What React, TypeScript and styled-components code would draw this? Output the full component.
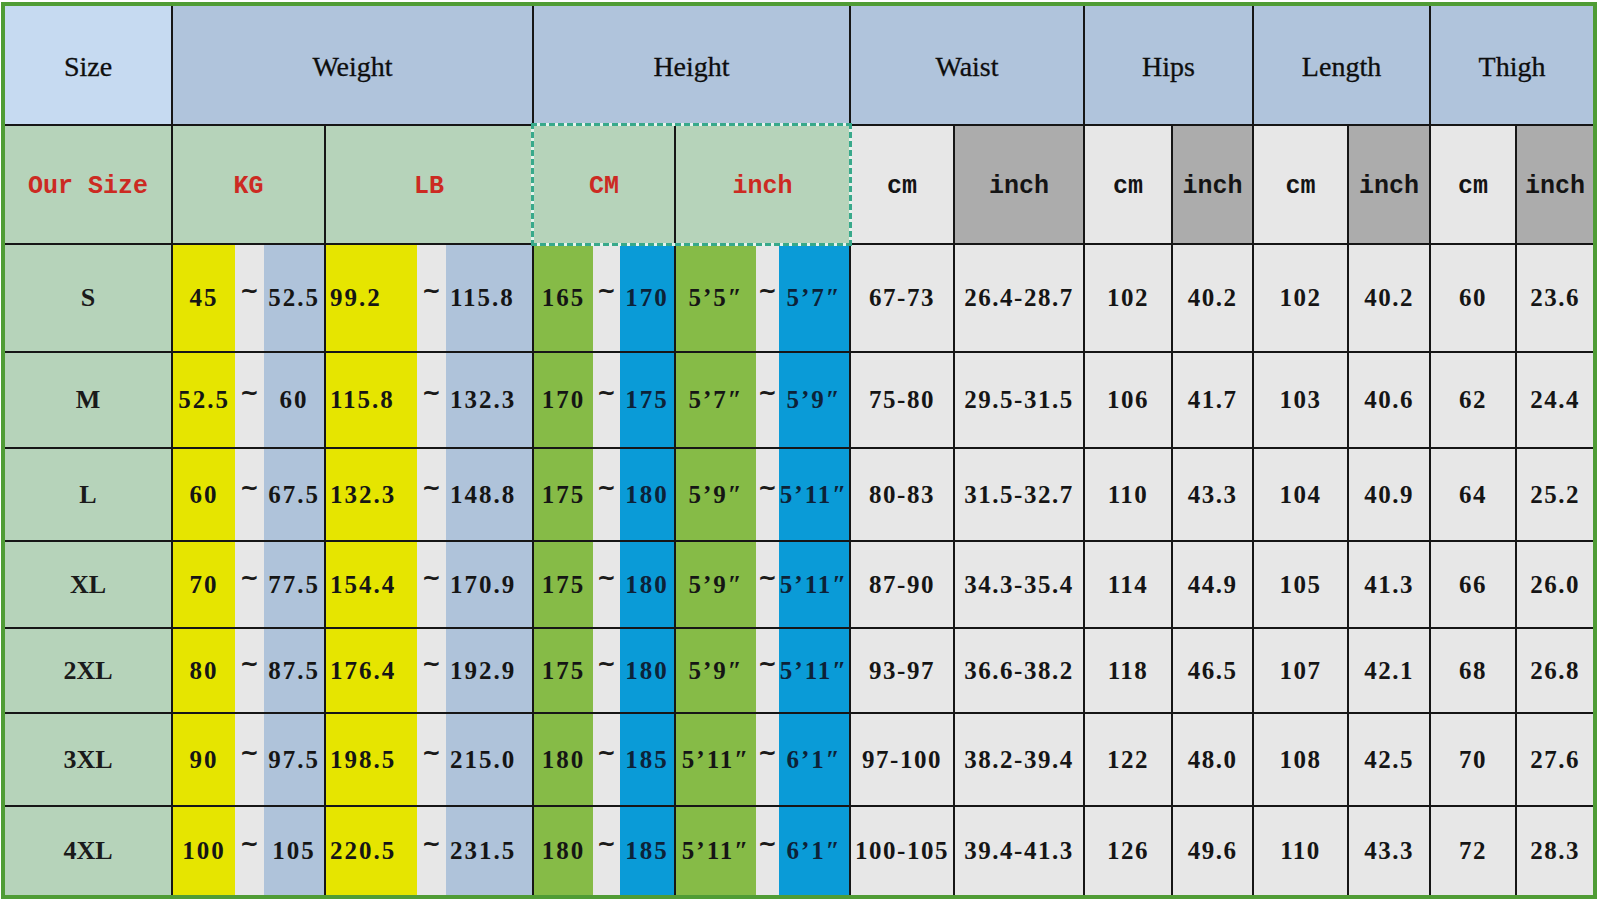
import React, { FC } from 'react'
import styled, { createGlobalStyle } from 'styled-components'

const LINE = '#161616'
const SAGE = '#b6d3ba'
const HEAD = '#b0c4dc'
const PALE = '#e7e7e7'
const YELLOW = '#e6e500'
const STEEL = '#afc3da'
const GRASS = '#86bb47'
const SKY = '#0a9bd7'
const RED = '#cc2a22'

type Range = [string, string]

type SizeRow = {
  size: string
  kg: Range
  lb: Range
  cm: Range
  ft: Range
  waist: [string, string]
  hips: [string, string]
  length: [string, string]
  thigh: [string, string]
}

const ROWS: SizeRow[] = [
  { size: 'S', kg: ['45', '52.5'], lb: ['99.2', '115.8'], cm: ['165', '170'], ft: ['5’5″', '5’7″'], waist: ['67-73', '26.4-28.7'], hips: ['102', '40.2'], length: ['102', '40.2'], thigh: ['60', '23.6'] },
  { size: 'M', kg: ['52.5', '60'], lb: ['115.8', '132.3'], cm: ['170', '175'], ft: ['5’7″', '5’9″'], waist: ['75-80', '29.5-31.5'], hips: ['106', '41.7'], length: ['103', '40.6'], thigh: ['62', '24.4'] },
  { size: 'L', kg: ['60', '67.5'], lb: ['132.3', '148.8'], cm: ['175', '180'], ft: ['5’9″', '5’11″'], waist: ['80-83', '31.5-32.7'], hips: ['110', '43.3'], length: ['104', '40.9'], thigh: ['64', '25.2'] },
  { size: 'XL', kg: ['70', '77.5'], lb: ['154.4', '170.9'], cm: ['175', '180'], ft: ['5’9″', '5’11″'], waist: ['87-90', '34.3-35.4'], hips: ['114', '44.9'], length: ['105', '41.3'], thigh: ['66', '26.0'] },
  { size: '2XL', kg: ['80', '87.5'], lb: ['176.4', '192.9'], cm: ['175', '180'], ft: ['5’9″', '5’11″'], waist: ['93-97', '36.6-38.2'], hips: ['118', '46.5'], length: ['107', '42.1'], thigh: ['68', '26.8'] },
  { size: '3XL', kg: ['90', '97.5'], lb: ['198.5', '215.0'], cm: ['180', '185'], ft: ['5’11″', '6’1″'], waist: ['97-100', '38.2-39.4'], hips: ['122', '48.0'], length: ['108', '42.5'], thigh: ['70', '27.6'] },
  { size: '4XL', kg: ['100', '105'], lb: ['220.5', '231.5'], cm: ['180', '185'], ft: ['5’11″', '6’1″'], waist: ['100-105', '39.4-41.3'], hips: ['126', '49.6'], length: ['110', '43.3'], thigh: ['72', '28.3'] },
]

const GlobalStyle = createGlobalStyle`
  html, body {
    margin: 0;
    background: #ffffff;
  }
`

const Page = styled.div`
  padding: 2px 0 0 1px;
`

const Frame = styled.div`
  display: inline-block;
  border: 4px solid #4f9c35;
`

const Table = styled.div`
  display: grid;
  grid-template-columns: 166px 151px 206px 140px 173px 102px 128px 86px 79px 93px 80px 84px 76px;
  grid-template-rows: 118px 117px 106px 94px 91px 85px 83px 91px 88px;
  gap: 2px;
  background: ${LINE};
`

const HeadCell = styled.div<{ $bg: string; $span?: number }>`
  grid-column: span ${(p) => p.$span ?? 1};
  display: flex;
  align-items: center;
  justify-content: center;
  padding-top: 4px;
  background: ${(p) => p.$bg};
  font-family: 'Liberation Serif', 'Times New Roman', serif;
  font-size: 28px;
  color: #0e0e0e;
  -webkit-text-stroke: 0.3px #0e0e0e;
`

const SubCell = styled.div<{ $bg: string; $red?: boolean }>`
  display: flex;
  align-items: center;
  justify-content: center;
  padding-top: 4px;
  background: ${(p) => p.$bg};
  font-family: 'Liberation Mono', 'Courier New', monospace;
  font-weight: 700;
  font-size: 25px;
  color: ${(p) => (p.$red ? RED : '#141414')};
  white-space: pre;
`

const DashedGroup = styled.div`
  grid-column: span 2;
  display: grid;
  grid-template-columns: subgrid;
  gap: 2px;
  background: ${LINE};
  box-shadow: 0 0 0 3px #e4f3ec;
  outline: 3px dashed #38a98b;
  position: relative;
  z-index: 1;
`

const LabelCell = styled.div`
  display: flex;
  align-items: center;
  justify-content: center;
  background: ${SAGE};
  font-family: 'Liberation Serif', 'Times New Roman', serif;
  font-weight: 700;
  font-size: 26px;
  color: #1a1a1a;
`

const Split = styled.div<{ $cols: string }>`
  display: grid;
  grid-template-columns: ${(p) => p.$cols};
`

const Seg = styled.div<{ $bg: string; $start?: boolean; $ink?: string }>`
  display: flex;
  align-items: center;
  justify-content: ${(p) => (p.$start ? 'flex-start' : 'center')};
  padding-left: ${(p) => (p.$start ? '4px' : '0')};
  background: ${(p) => p.$bg};
  color: ${(p) => p.$ink ?? '#151515'};
  font-family: 'Liberation Serif', 'Times New Roman', serif;
  font-weight: 700;
  font-size: 25px;
  letter-spacing: 2px;
  white-space: nowrap;
`

const Tilde = styled.div`
  display: flex;
  align-items: center;
  justify-content: center;
  padding-bottom: 16px;
  background: ${PALE};
  font-family: 'DejaVu Sans', sans-serif;
  font-weight: 700;
  font-size: 23px;
  color: #1a1a1a;
`

const Plain = styled.div`
  display: flex;
  align-items: center;
  justify-content: center;
  background: ${PALE};
  font-family: 'Liberation Serif', 'Times New Roman', serif;
  font-weight: 700;
  font-size: 25px;
  letter-spacing: 1.5px;
  color: #151515;
  white-space: nowrap;
`

type SplitCellProps = {
  cols: string
  range: Range
  first: string
  second: string
  secondInk?: string
  start?: boolean
}

const SplitCell: FC<SplitCellProps> = ({ cols, range, first, second, secondInk, start }) => (
  <Split $cols={cols}>
    <Seg $bg={first} $start={start}>
      {range[0]}
    </Seg>
    <Tilde>~</Tilde>
    <Seg $bg={second} $start={start} $ink={secondInk}>
      {range[1]}
    </Seg>
  </Split>
)

const MEASURES = ['Waist', 'Hips', 'Length', 'Thigh']

const App: FC = () => (
  <Page>
    <GlobalStyle />
    <Frame>
      <Table>
        <HeadCell $bg="#c6daf1">Size</HeadCell>
        <HeadCell $bg={HEAD} $span={2}>Weight</HeadCell>
        <HeadCell $bg={HEAD} $span={2}>Height</HeadCell>
        {MEASURES.map((m) => (
          <HeadCell key={m} $bg={HEAD} $span={2}>
            {m}
          </HeadCell>
        ))}

        <SubCell $bg={SAGE} $red>
          Our Size
        </SubCell>
        <SubCell $bg={SAGE} $red>
          KG
        </SubCell>
        <SubCell $bg={SAGE} $red>
          LB
        </SubCell>
        <DashedGroup>
          <SubCell $bg={SAGE} $red>
            CM
          </SubCell>
          <SubCell $bg={SAGE} $red>
            inch
          </SubCell>
        </DashedGroup>
        {MEASURES.map((m) => (
          <React.Fragment key={m}>
            <SubCell $bg={PALE}>cm</SubCell>
            <SubCell $bg="#acacac">inch</SubCell>
          </React.Fragment>
        ))}

        {ROWS.map((r) => (
          <React.Fragment key={r.size}>
            <LabelCell>{r.size}</LabelCell>
            <SplitCell cols="62px 29px 1fr" range={r.kg} first={YELLOW} second={STEEL} />
            <SplitCell cols="91px 29px 1fr" range={r.lb} first={YELLOW} second={STEEL} start />
            <SplitCell cols="59px 27px 1fr" range={r.cm} first={GRASS} second={SKY} secondInk="#0d2238" />
            <SplitCell cols="80px 23px 1fr" range={r.ft} first={GRASS} second={SKY} secondInk="#0d2238" />
            {[...r.waist, ...r.hips, ...r.length, ...r.thigh].map((v, i) => (
              <Plain key={i}>{v}</Plain>
            ))}
          </React.Fragment>
        ))}
      </Table>
    </Frame>
  </Page>
)

export default App
